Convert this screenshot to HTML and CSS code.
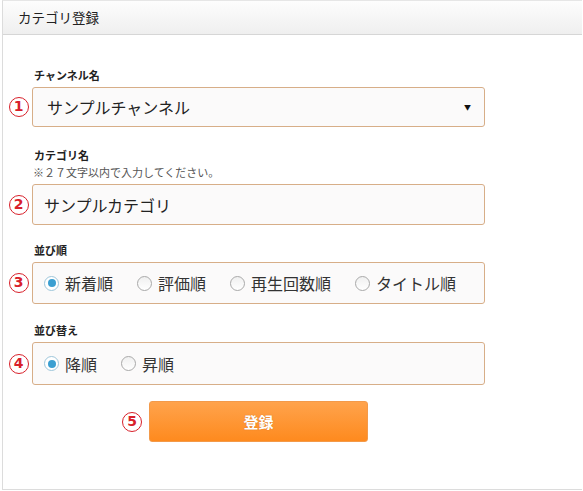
FILE: index.html
```html
<!DOCTYPE html>
<html lang="ja">
<head>
<meta charset="utf-8">
<title>カテゴリ登録</title>
<link rel="stylesheet" href="styles.css">
</head>
<body>
<div class="panel">
  <div class="panel-head">カテゴリ登録</div>
  <form class="panel-body">
    <div class="group g1">
      <div class="label">チャンネル名</div>
      <div class="row">
        <span class="num-col"><span class="num">1</span></span>
        <div class="field select"><span>サンプルチャンネル</span><span class="arrow">▼</span></div>
      </div>
    </div>
    <div class="group g2">
      <div class="label">カテゴリ名</div>
      <div class="note">※２７文字以内で入力してください。</div>
      <div class="row">
        <span class="num-col"><span class="num">2</span></span>
        <div class="field input">サンプルカテゴリ</div>
      </div>
    </div>
    <div class="group g3">
      <div class="label">並び順</div>
      <div class="row">
        <span class="num-col"><span class="num">3</span></span>
        <div class="field radios">
          <span class="opt"><span class="radio on"></span>新着順</span>
          <span class="opt"><span class="radio"></span>評価順</span>
          <span class="opt"><span class="radio"></span>再生回数順</span>
          <span class="opt"><span class="radio"></span>タイトル順</span>
        </div>
      </div>
    </div>
    <div class="group g4">
      <div class="label">並び替え</div>
      <div class="row">
        <span class="num-col"><span class="num">4</span></span>
        <div class="field radios tall">
          <span class="opt"><span class="radio on"></span>降順</span>
          <span class="opt"><span class="radio"></span>昇順</span>
        </div>
      </div>
    </div>
    <div class="submit-row">
      <span class="num">5</span>
      <div class="btn">登録</div>
    </div>
  </form>
</div>
</body>
</html>
```

FILE: styles.css
```css
html, body {
  margin: 0;
  padding: 0;
  background: #fff;
  overflow: hidden;
}
body {
  font-family: "Noto Sans CJK JP", "Noto Sans", sans-serif;
  color: #222;
  width: 583px;
  height: 491px;
}
.panel {
  margin-left: 2px;
  width: 579px;
  height: 488px;
  border: 1px solid #dcdcdc;
  border-top-color: #e6e6e6;
  border-right: none;
}
.panel-head {
  height: 33px;
  line-height: 33px;
  padding-left: 15px;
  font-size: 13.5px;
  color: #222;
  background: linear-gradient(#fdfdfd, #efefef);
  border-bottom: 1px solid #d6d6d6;
}
.panel-body {
  padding-top: 32px;
  margin: 0;
}
.group {
  padding-left: 29px;
}
.label {
  font-size: 11px;
  font-weight: bold;
  line-height: 16px;
  margin-bottom: 4px;
  padding-left: 2px;
  color: #222;
}
.note {
  font-size: 11px;
  line-height: 16px;
  color: #555;
  margin-top: -3px;
  margin-bottom: 4px;
  padding-left: 1px;
}
.g2 { margin-top: 20px; }
.g3 { margin-top: 17px; }
.g4 { margin-top: 18px; }
.row {
  display: flex;
  align-items: center;
  margin-left: -29px;
}
.num-col {
  width: 29px;
  display: flex;
  justify-content: center;
  padding-left: 2px;
  box-sizing: border-box;
}
.num {
  width: 20px;
  height: 20px;
  box-sizing: border-box;
  border: 1.5px solid #d8202a;
  border-radius: 50%;
  color: #d8202a;
  font-family: "DejaVu Sans", sans-serif;
  font-size: 14px;
  font-weight: bold;
  line-height: 17px;
  text-align: center;
}
.field {
  width: 453px;
  box-sizing: border-box;
  border: 1px solid #d7ae88;
  border-radius: 3px;
  background: #fbfafa;
  display: flex;
  align-items: center;
}
.select {
  height: 40px;
  padding: 0 12px 0 14px;
  justify-content: space-between;
  font-size: 16px;
}
.arrow {
  font-size: 7px;
  color: #111;
  margin-right: 1px;
}
.input {
  height: 41px;
  padding-left: 11px;
  font-size: 16px;
}
.radios {
  height: 42px;
  padding-left: 11px;
  gap: 24px;
  font-size: 16px;
}
.radios.tall { height: 43px; }
.opt {
  display: inline-flex;
  align-items: center;
  gap: 6px;
  color: #333;
}
.radio {
  width: 15px;
  height: 15px;
  box-sizing: border-box;
  border-radius: 50%;
  border: 1px solid #a9a9a9;
  background: linear-gradient(#f0f0f0, #fff);
  position: relative;
}
.radio.on {
  border-color: #9ec6da;
  background: #fff;
}
.radio.on::after {
  content: "";
  position: absolute;
  left: 2.5px;
  top: 2.5px;
  width: 8px;
  height: 8px;
  border-radius: 50%;
  background: #3b9fd1;
}
.submit-row {
  display: flex;
  align-items: center;
  margin-top: 16px;
  padding-left: 119px;
}
.submit-row .num {
  margin-right: 7px;
}
.btn {
  width: 219px;
  height: 41px;
  border-radius: 3px;
  background: linear-gradient(#ffa34c, #fe8a1e);
  border: 1px solid #f39a4a;
  box-sizing: border-box;
  color: #fff;
  font-size: 15px;
  font-weight: bold;
  display: flex;
  align-items: center;
  justify-content: center;
  text-shadow: 0 0 1px rgba(150, 70, 0, 0.5);
}
```
